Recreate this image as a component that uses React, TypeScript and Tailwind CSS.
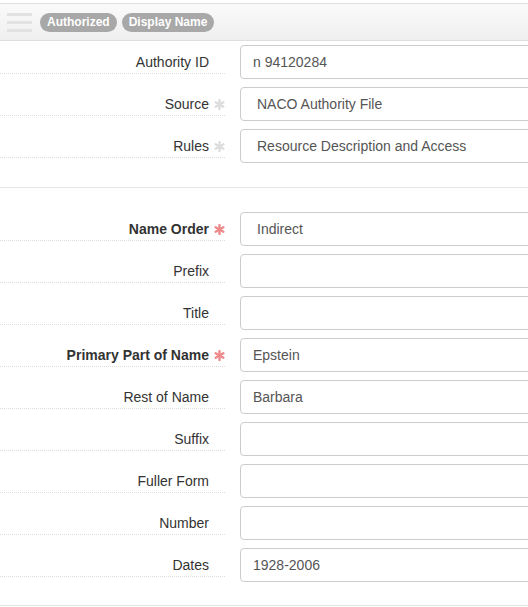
import React from 'react';

type Field = {
  label: string;
  value?: string;
  mark?: 'required' | 'optional';
  select?: boolean;
};

const topFields: Field[] = [
  { label: 'Authority ID', value: 'n 94120284' },
  { label: 'Source', value: 'NACO Authority File', mark: 'optional', select: true },
  { label: 'Rules', value: 'Resource Description and Access', mark: 'optional', select: true },
];

const nameFields: Field[] = [
  { label: 'Name Order', value: 'Indirect', mark: 'required', select: true },
  { label: 'Prefix' },
  { label: 'Title' },
  { label: 'Primary Part of Name', value: 'Epstein', mark: 'required' },
  { label: 'Rest of Name', value: 'Barbara' },
  { label: 'Suffix' },
  { label: 'Fuller Form' },
  { label: 'Number' },
  { label: 'Dates', value: '1928-2006' },
];

const Asterisk = ({ color }: { color: string }) => (
  <svg width="11" height="11" viewBox="0 0 10 10" className="shrink-0">
    <g stroke={color} strokeWidth="2.2" strokeLinecap="round">
      <line x1="5" y1="1" x2="5" y2="9" />
      <line x1="1.5" y1="3" x2="8.5" y2="7" />
      <line x1="1.5" y1="7" x2="8.5" y2="3" />
    </g>
  </svg>
);

const Row = ({ field }: { field: Field }) => {
  const required = field.mark === 'required';
  return (
    <div className="flex items-center py-[4px]">
      <div className="w-[225px] shrink-0 mt-[3px] pb-[2px] flex items-center justify-end border-b border-dotted border-[#dcdcdc] h-[21px]">
        <span className={`text-[14px] leading-[20px] text-[#333] ${required ? 'font-bold' : ''}`}>
          {field.label}
        </span>
        <span className="w-[16px] flex justify-center pl-[4px]">
          {field.mark === 'required' && <Asterisk color="#ee8a8a" />}
          {field.mark === 'optional' && <Asterisk color="#dddddd" />}
        </span>
      </div>
      <div
        className={`ml-[15px] w-[320px] shrink-0 h-[34px] border border-[#cccccc] rounded-[4px] bg-white flex items-center text-[14px] text-[#555] ${
          field.select ? 'pl-[16px]' : 'pl-[12px]'
        }`}
      >
        {field.value}
      </div>
    </div>
  );
};

export default function App() {
  return (
    <div className="w-[528px] h-[607px] overflow-hidden bg-white font-['Liberation_Sans',Arial,sans-serif]">
      <div className="mt-[3px] h-[38px] border-y border-[#dedede] bg-gradient-to-b from-[#fafafa] to-[#efefef] flex items-center">
        <div className="ml-[7px] w-[25px] flex flex-col gap-[5px]">
          <div className="h-[3px] bg-[#e2e2e2]" />
          <div className="h-[3px] bg-[#e2e2e2]" />
          <div className="h-[3px] bg-[#e2e2e2]" />
        </div>
        <div className="ml-[8px] flex gap-[5px]">
          <span className="h-[19px] px-[7px] rounded-full bg-[#a8a8a8] text-white text-[12px] font-bold leading-[19px]">
            Authorized
          </span>
          <span className="h-[19px] px-[7px] rounded-full bg-[#a8a8a8] text-white text-[12px] font-bold leading-[19px]">
            Display Name
          </span>
        </div>
      </div>

      <div>
        {topFields.map((f) => (
          <Row key={f.label} field={f} />
        ))}
      </div>

      <div className="mt-[20px] border-t border-[#e5e5e5]" />

      <div className="mt-[20px]">
        {nameFields.map((f) => (
          <Row key={f.label} field={f} />
        ))}
      </div>

      <div className="mt-[19px] border-t border-[#e5e5e5]" />
    </div>
  );
}
